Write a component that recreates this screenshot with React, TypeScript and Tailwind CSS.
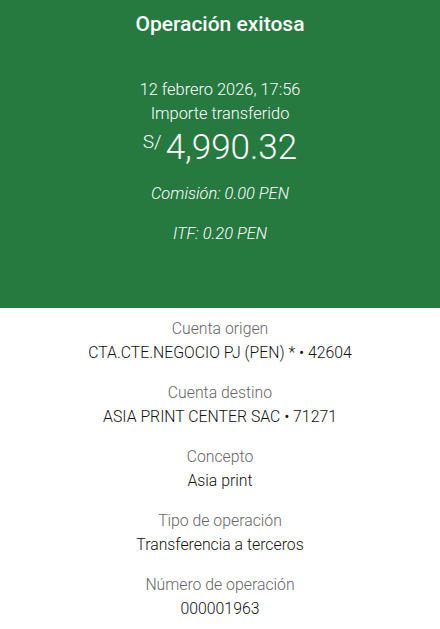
const details = [
  { label: "Cuenta origen", value: "CTA.CTE.NEGOCIO PJ (PEN) * • 42604" },
  { label: "Cuenta destino", value: "ASIA PRINT CENTER SAC • 71271" },
  { label: "Concepto", value: "Asia print" },
  { label: "Tipo de operación", value: "Transferencia a terceros" },
  { label: "Número de operación", value: "000001963" },
];

export default function App() {
  return (
    <div
      className="flex h-[629px] w-[440px] flex-col overflow-hidden bg-white text-center"
      style={{ fontFamily: "Roboto, 'Noto Sans', sans-serif" }}
    >
      <div className="flex h-[308px] flex-col items-center bg-[#267a40] text-white">
        <h1 className="mt-[11px] text-[21px] font-medium leading-[26px]">
          Operación exitosa
        </h1>
        <p className="mt-[41px] text-[16.4px] font-light leading-[24px]">
          12 febrero 2026, 17:56
        </p>
        <p className="text-[16.4px] font-light leading-[24px]">
          Importe transferido
        </p>
        <p className="mt-[2px] flex items-start font-light leading-[40px]">
          <span className="mr-[4px] mt-[-6px] text-[19px]">S/</span>
          <span className="text-[35px]">4,990.32</span>
        </p>
        <p className="mt-[14px] text-[16.4px] font-light italic leading-[24px]">
          Comisión: 0.00 PEN
        </p>
        <p className="mt-[16px] text-[16.4px] font-light italic leading-[24px]">
          ITF: 0.20 PEN
        </p>
      </div>
      <div className="flex flex-col gap-[16px] pt-[9px]">
        {details.map((d) => (
          <div key={d.label} className="flex flex-col">
            <span className="text-[15.8px] font-light leading-[24px] text-[#666666]">
              {d.label}
            </span>
            <span className="text-[15.8px] font-light leading-[24px] text-[#121212]">
              {d.value}
            </span>
          </div>
        ))}
      </div>
    </div>
  );
}
